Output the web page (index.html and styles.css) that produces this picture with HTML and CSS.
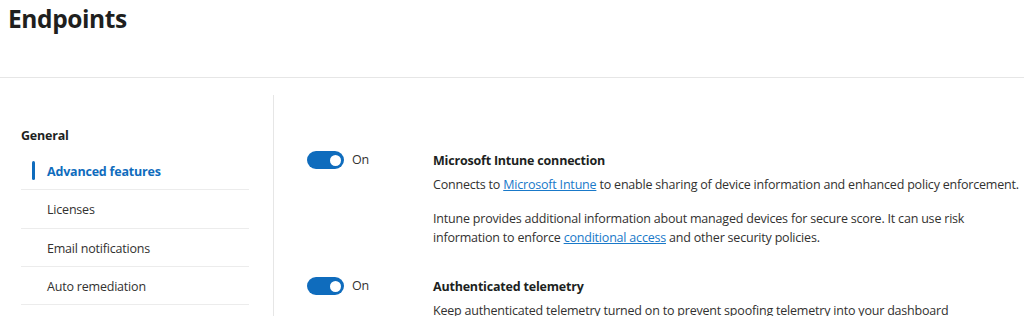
FILE: index.html
```html
<!DOCTYPE html>
<html lang="en">
  <head>
    <meta charset="UTF-8" />
    <title>Endpoints</title>
    <link rel="stylesheet" href="styles.css">
  </head>
  <body>
    <header class="page-header">
      <h1 class="page-title">Endpoints</h1>
    </header>

    <main class="layout">
      <aside class="sidebar">
        <h2 class="nav-heading">General</h2>
        <ul class="nav-list">
          <li class="nav-item active">Advanced features</li>
          <li class="nav-item">Licenses</li>
          <li class="nav-item">Email notifications</li>
          <li class="nav-item">Auto remediation</li>
        </ul>
      </aside>

      <section class="settings">
        <div class="setting">
          <div class="toggle-wrap">
            <span class="toggle"><span class="knob"></span></span>
            <span class="toggle-label">On</span>
          </div>
          <div class="setting-body">
            <h3 class="setting-title">Microsoft Intune connection</h3>
            <p class="setting-text">Connects to <a href="#">Microsoft Intune</a> to enable sharing of device information and enhanced policy enforcement.</p>
            <p class="setting-text spaced">Intune provides additional information about managed devices for secure score. It can use risk information to enforce <a href="#">conditional access</a> and other security policies.</p>
          </div>
        </div>

        <div class="setting">
          <div class="toggle-wrap">
            <span class="toggle"><span class="knob"></span></span>
            <span class="toggle-label">On</span>
          </div>
          <div class="setting-body">
            <h3 class="setting-title">Authenticated telemetry</h3>
            <p class="setting-text">Keep authenticated telemetry turned on to prevent spoofing telemetry into your dashboard</p>
          </div>
        </div>
      </section>
    </main>
  </body>
</html>
```

FILE: styles.css
```css
* {
  margin: 0;
  padding: 0;
  box-sizing: border-box;
}

:root {
  --text: #323130;
  --heading: #201f1e;
  --blue: #0f6cbd;
  --link: #1979c9;
  --line: #e6e6e6;
}

body {
  width: 1024px;
  height: 316px;
  overflow: hidden;
  background: #ffffff;
  color: var(--text);
  font-family: "Open Sans", "Noto Sans", sans-serif;
  font-size: 12.5px;
  letter-spacing: -0.2px;
}

.page-header {
  height: 78px;
  padding: 2px 0 0 8px;
  border-bottom: 1px solid var(--line);
}

.page-title {
  font-size: 24.5px;
  font-weight: 700;
  color: var(--heading);
  line-height: 34px;
  letter-spacing: -0.4px;
}

.layout {
  display: flex;
  margin-top: 17px;
}

.sidebar {
  width: 274px;
  flex-shrink: 0;
  height: 230px;
  border-right: 1px solid var(--line);
  padding: 31px 0 0 21px;
}

.nav-heading {
  font-size: 12.5px;
  font-weight: 700;
  color: var(--heading);
  line-height: 20px;
  margin-bottom: 6px;
}

.nav-list {
  list-style: none;
  width: 228px;
}

.nav-item {
  position: relative;
  height: 38.3px;
  line-height: 37px;
  padding: 1px 0 0 26px;
  border-bottom: 1px solid #ececec;
}

.nav-item.active {
  color: var(--blue);
  font-weight: 700;
}

.nav-item.active::before {
  content: "";
  position: absolute;
  left: 11px;
  top: 9px;
  width: 3px;
  height: 19px;
  border-radius: 2px;
  background: var(--blue);
}

.settings {
  padding: 56px 0 0 33px;
}

.setting {
  display: flex;
  margin-bottom: 30px;
}

.toggle-wrap {
  width: 126px;
  flex-shrink: 0;
  display: flex;
  align-items: flex-start;
  gap: 8px;
}

.toggle {
  position: relative;
  width: 37px;
  height: 18px;
  border-radius: 9px;
  background: var(--blue);
}

.knob {
  position: absolute;
  right: 3px;
  top: 3.5px;
  width: 11px;
  height: 11px;
  border-radius: 50%;
  background: #ffffff;
}

.toggle-label {
  line-height: 17px;
}

.setting-title {
  font-size: 12.5px;
  font-weight: 700;
  color: var(--heading);
  line-height: 18px;
  margin: 1px 0 5px;
}

.setting-text {
  line-height: 19px;
  white-space: nowrap;
}

.setting-text.spaced {
  white-space: normal;
  width: 590px;
  margin-top: 15px;
}

.setting-text a {
  color: var(--link);
}
```
